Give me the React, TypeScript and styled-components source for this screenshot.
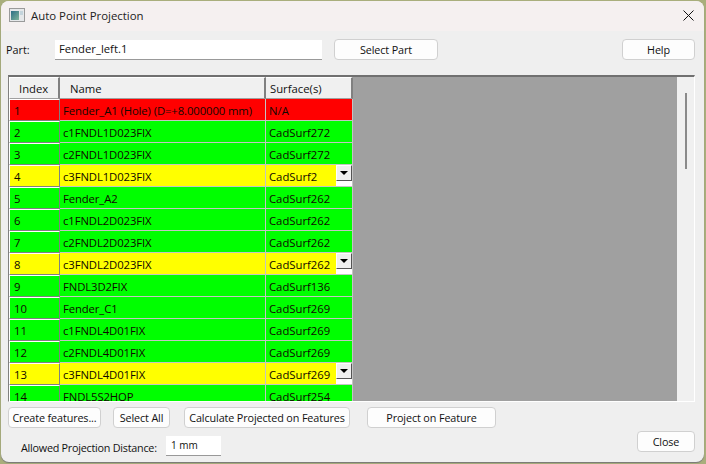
import { createGlobalStyle } from "styled-components";
import styled from "styled-components";

const Global = createGlobalStyle`
  html, body { margin: 0; padding: 0; background: #a9ae7c; }
  body { width: 706px; height: 464px; overflow: hidden; font-family: "Open Sans", "Noto Sans", sans-serif; font-size: 11.3px; color: #111; }
`;

const Window = styled.div`
  width: 703px;
  height: 461px;
  margin: 1px 0 0 1px;
  background: #efefef;
  border-radius: 8px;
  overflow: hidden;
  display: flex;
  flex-direction: column;
  box-shadow: 0 1px 1px #777;
`;

const TitleBar = styled.div`
  height: 30px;
  flex: none;
  box-sizing: border-box;
  background: #f5f0f0;
  display: flex;
  align-items: center;
  padding: 0 10px 2px 8px;
  gap: 6px;
  font-size: 11.4px;
`;

const Title = styled.span`
  flex: 1;
  color: #222;
`;

const Body = styled.div`
  flex: 1;
  display: flex;
  flex-direction: column;
  padding: 8px 9px 0 5px;
`;

const TopRow = styled.div`
  display: flex;
  align-items: center;
  height: 21px;
`;

const PartLabel = styled.label`
  width: 49px;
  font-size: 10.8px;
`;

const TextBox = styled.div<{ $w: number }>`
  width: ${(p) => p.$w}px;
  height: 20px;
  box-sizing: border-box;
  background: #fff;
  border-bottom: 1px solid #999;
  padding: 0 0 0 4px;
  line-height: 18px;
  white-space: nowrap;
`;

const Button = styled.button<{ $w: number; $gap?: number }>`
  width: ${(p) => p.$w}px;
  height: 21px;
  margin-left: ${(p) => p.$gap ?? 0}px;
  box-sizing: border-box;
  flex: none;
  padding: 0;
  background: #fdfdfd;
  border: 1px solid #d0d0d0;
  border-radius: 4px;
  font-family: inherit;
  font-size: 10.8px;
  letter-spacing: -0.12px;
  white-space: nowrap;
  color: #111;
`;

const Spacer = styled.div`
  flex: 1;
`;

const TableFrame = styled.div`
  margin-top: 15px;
  margin-left: 2px;
  height: 327px;
  box-sizing: border-box;
  border-top: 2px solid #707070;
  border-left: 1px solid #808080;
  border-right: 1px solid #fff;
  border-bottom: 1px solid #fff;
  display: flex;
  overflow: hidden;
`;

const Grid = styled.div`
  width: 344px;
  flex: none;
  overflow: hidden;
`;

const Row = styled.div`
  display: grid;
  grid-template-columns: 51px 206px 87px;
`;

const HeadCell = styled.div<{ $first?: boolean; $pad: number }>`
  height: 22px;
  box-sizing: border-box;
  background: #f0f0f0;
  line-height: 21px;
  padding-left: ${(p) => p.$pad}px;
  border-left: ${(p) => (p.$first ? "1px solid #fff" : "none")};
  border-top: 1px solid #fff;
  border-right: 2px solid #808080;
  border-bottom: 1px solid #a0a0a0;
`;

const Cell = styled.div<{ $bg: string; $pad: number }>`
  position: relative;
  height: 22px;
  box-sizing: border-box;
  background: ${(p) => p.$bg};
  line-height: 23px;
  padding-left: ${(p) => p.$pad}px;
  border-right: 1px solid #c4c4c4;
  border-bottom: 1px solid #c4c4c4;
  white-space: nowrap;
  overflow: hidden;
  color: #100800;
`;

const NameCell = styled(Cell)`
  letter-spacing: -0.1px;
`;

const IndexCell = styled(Cell)`
  border-top: 1px solid #fff;
  border-left: 1px solid #fff;
  border-right: 1px solid #808080;
  border-bottom: 1px solid #808080;
  line-height: 21px;
`;

const DropButton = styled.div`
  position: absolute;
  right: 0;
  top: 0;
  width: 16px;
  height: 16px;
  box-sizing: border-box;
  background: #f0f0f0;
  border: 1px solid;
  border-color: #fff #555 #555 #fff;
  display: flex;
  align-items: center;
  justify-content: center;
  &::after {
    content: "";
    border-left: 4px solid transparent;
    border-right: 4px solid transparent;
    border-top: 4px solid #000;
  }
`;

const DropStrip = styled.div`
  position: absolute;
  right: 0;
  bottom: 0;
  width: 16px;
  height: 5px;
  background: #fff;
`;

const Gray = styled.div`
  width: 324px;
  flex: none;
  background: #a0a0a0;
`;

const ScrollTrack = styled.div`
  flex: 1;
  background: #f0f0f0;
  display: flex;
  justify-content: center;
  padding-top: 16px;
`;

const Thumb = styled.div`
  width: 2px;
  height: 76px;
  background: #8a8a8a;
`;

const ActionRow = styled.div`
  display: flex;
  margin-top: 5px;
  margin-left: 2px;
`;

const BottomRow = styled.div`
  display: flex;
  align-items: flex-start;
  margin-left: 15px;
  margin-top: 3px;
`;

const DistanceLabel = styled.label`
  width: 145px;
  padding-top: 9px;
  font-size: 10.8px;
  letter-spacing: -0.25px;
  white-space: nowrap;
`;

const DistanceBox = styled(TextBox)`
  margin-top: 5px;
  padding-left: 5px;
  font-size: 10px;
`;

type Item = { i: number; name: string; surf: string; kind: "red" | "green" | "yellow" };

const items: Item[] = [
  { i: 1, name: "Fender_A1 (Hole) (D=+8.000000 mm)", surf: "N/A", kind: "red" },
  { i: 2, name: "c1FNDL1D023FIX", surf: "CadSurf272", kind: "green" },
  { i: 3, name: "c2FNDL1D023FIX", surf: "CadSurf272", kind: "green" },
  { i: 4, name: "c3FNDL1D023FIX", surf: "CadSurf2", kind: "yellow" },
  { i: 5, name: "Fender_A2", surf: "CadSurf262", kind: "green" },
  { i: 6, name: "c1FNDL2D023FIX", surf: "CadSurf262", kind: "green" },
  { i: 7, name: "c2FNDL2D023FIX", surf: "CadSurf262", kind: "green" },
  { i: 8, name: "c3FNDL2D023FIX", surf: "CadSurf262", kind: "yellow" },
  { i: 9, name: "FNDL3D2FIX", surf: "CadSurf136", kind: "green" },
  { i: 10, name: "Fender_C1", surf: "CadSurf269", kind: "green" },
  { i: 11, name: "c1FNDL4D01FIX", surf: "CadSurf269", kind: "green" },
  { i: 12, name: "c2FNDL4D01FIX", surf: "CadSurf269", kind: "green" },
  { i: 13, name: "c3FNDL4D01FIX", surf: "CadSurf269", kind: "yellow" },
  { i: 14, name: "FNDL5S2HOP", surf: "CadSurf254", kind: "green" },
];

const colors = { red: "#ff0000", green: "#00ff00", yellow: "#ffff00" };

const AppIcon = () => (
  <svg width="16" height="14" viewBox="0 0 16 14">
    <defs>
      <linearGradient id="pane" x1="0" y1="0" x2="1" y2="1">
        <stop offset="0" stopColor="#2d6f86" />
        <stop offset="1" stopColor="#7fb59a" />
      </linearGradient>
    </defs>
    <rect x="0.5" y="0.5" width="15" height="13" fill="#e6e8ea" stroke="#9a9a9a" />
    <rect x="2" y="3" width="8" height="9" fill="url(#pane)" />
    <rect x="11" y="3" width="3" height="4" fill="#c4d4dc" />
  </svg>
);

const CloseIcon = () => (
  <svg width="11" height="11" viewBox="0 0 11 11">
    <path d="M0.5 0.5 L10.5 10.5 M10.5 0.5 L0.5 10.5" stroke="#111" strokeWidth="1" fill="none" />
  </svg>
);

export default function App() {
  return (
    <>
      <Global />
      <Window>
        <TitleBar>
          <AppIcon />
          <Title>Auto Point Projection</Title>
          <CloseIcon />
        </TitleBar>
        <Body>
          <TopRow>
            <PartLabel>Part:</PartLabel>
            <TextBox $w={267}>Fender_left.1</TextBox>
            <Button $w={104} $gap={12}>Select Part</Button>
            <Spacer />
            <Button $w={73}>Help</Button>
          </TopRow>
          <TableFrame>
            <Grid>
              <Row>
                <HeadCell $first $pad={9}>Index</HeadCell>
                <HeadCell $pad={10}>Name</HeadCell>
                <HeadCell $pad={4}>Surface(s)</HeadCell>
              </Row>
              {items.map((it) => (
                <Row key={it.i}>
                  <IndexCell $bg={colors[it.kind]} $pad={4}>{it.i}</IndexCell>
                  <NameCell $bg={colors[it.kind]} $pad={3}>{it.name}</NameCell>
                  <Cell $bg={colors[it.kind]} $pad={3}>
                    {it.surf}
                    {it.kind === "yellow" && (
                      <>
                        <DropStrip />
                        <DropButton />
                      </>
                    )}
                  </Cell>
                </Row>
              ))}
            </Grid>
            <Gray />
            <ScrollTrack>
              <Thumb />
            </ScrollTrack>
          </TableFrame>
          <ActionRow>
            <Button $w={93}>Create features...</Button>
            <Button $w={57} $gap={12}>Select All</Button>
            <Button $w={166} $gap={14}>Calculate Projected on Features</Button>
            <Button $w={129} $gap={17}>Project on Feature</Button>
          </ActionRow>
          <BottomRow>
            <DistanceLabel>Allowed Projection Distance:</DistanceLabel>
            <DistanceBox $w={55}>1 mm</DistanceBox>
            <Spacer />
            <Button $w={58}>Close</Button>
          </BottomRow>
        </Body>
      </Window>
    </>
  );
}
